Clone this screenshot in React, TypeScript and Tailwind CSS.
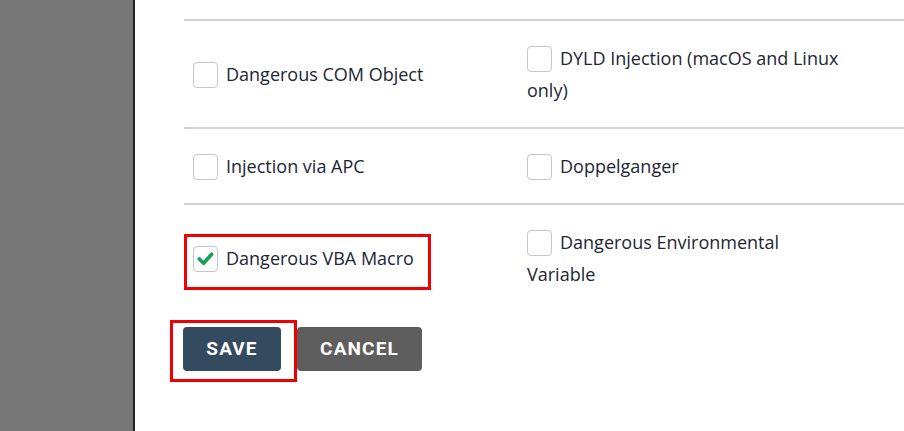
import React, { useState } from 'react';

type Item = { id: string; label: string };

const rows: [Item, Item][] = [
  [
    { id: 'com', label: 'Dangerous COM Object' },
    { id: 'dyld', label: 'DYLD Injection (macOS and Linux only)' },
  ],
  [
    { id: 'apc', label: 'Injection via APC' },
    { id: 'doppel', label: 'Doppelganger' },
  ],
  [
    { id: 'vba', label: 'Dangerous VBA Macro' },
    { id: 'env', label: 'Dangerous Environmental Variable' },
  ],
];

function Check({ checked, onClick }: { checked: boolean; onClick: () => void }) {
  return (
    <span
      onClick={onClick}
      className="inline-flex items-center justify-center w-[25px] h-[26px] mr-[8px] align-middle -mt-[3px] border border-[#c6c6c6] rounded-[4px] bg-white cursor-pointer"
    >
      {checked && (
        <svg viewBox="0 0 20 20" className="w-[19px] h-[19px]">
          <path d="M3.5 10.5 L8 15 L16.5 5.5" fill="none" stroke="#17a05a" strokeWidth="3.8" strokeLinecap="round" strokeLinejoin="round" />
        </svg>
      )}
    </span>
  );
}

export default function App() {
  const [checked, setChecked] = useState<Record<string, boolean>>({ vba: true });
  const toggle = (id: string) => setChecked(c => ({ ...c, [id]: !c[id] }));

  return (
    <div className="flex h-screen w-full overflow-hidden bg-white" style={{ fontFamily: '"Open Sans", "Liberation Sans", sans-serif' }}>
      {/* Left rail */}
      <div className="w-[135px] shrink-0 bg-[#777777] border-r-2 border-[#222222]" />

      {/* Content */}
      <div className="flex-1 pt-[19px] pl-[49px]">
        <div className="text-[18px] leading-[32px] text-[#1c2635]">
          {rows.map((row, i) => (
            <div key={i} className={`grid grid-cols-[334px_334px] ${i < 2 ? 'border-y-2' : 'border-t-2'} border-[#cfd1dc] -mb-[2px]`}>
              {row.map((item, j) => (
                <div key={item.id} className="relative flex items-center px-[9px] py-[21px]">
                  <label className={`block ${j === 1 ? 'w-[317px]' : ''}`}>
                    <Check checked={!!checked[item.id]} onClick={() => toggle(item.id)} />
                    {item.label}
                  </label>
                  {item.id === 'vba' && (
                    <div className="absolute left-0 top-[29px] w-[247px] h-[56px] border-[3px] border-[#f00000] pointer-events-none" />
                  )}
                </div>
              ))}
            </div>
          ))}
        </div>

        {/* Actions */}
        <div className="flex gap-[16px] mt-[18px] -ml-[1px]">
          <span className="relative">
            <button className="h-[44px] w-[98px] rounded-[4px] bg-[#344a5f] text-white text-[19px] font-bold tracking-[0.06em]" style={{ fontFamily: 'Roboto, "Liberation Sans", sans-serif' }}>
              SAVE
            </button>
            <span className="absolute -left-[13px] -top-[7px] w-[127px] h-[62px] border-[3px] border-[#f00000] pointer-events-none" />
          </span>
          <button className="h-[44px] w-[125px] rounded-[4px] bg-[#5e5e5e] text-white text-[19px] font-bold tracking-[0.06em]" style={{ fontFamily: 'Roboto, "Liberation Sans", sans-serif' }}>
            CANCEL
          </button>
        </div>
      </div>
    </div>
  );
}
